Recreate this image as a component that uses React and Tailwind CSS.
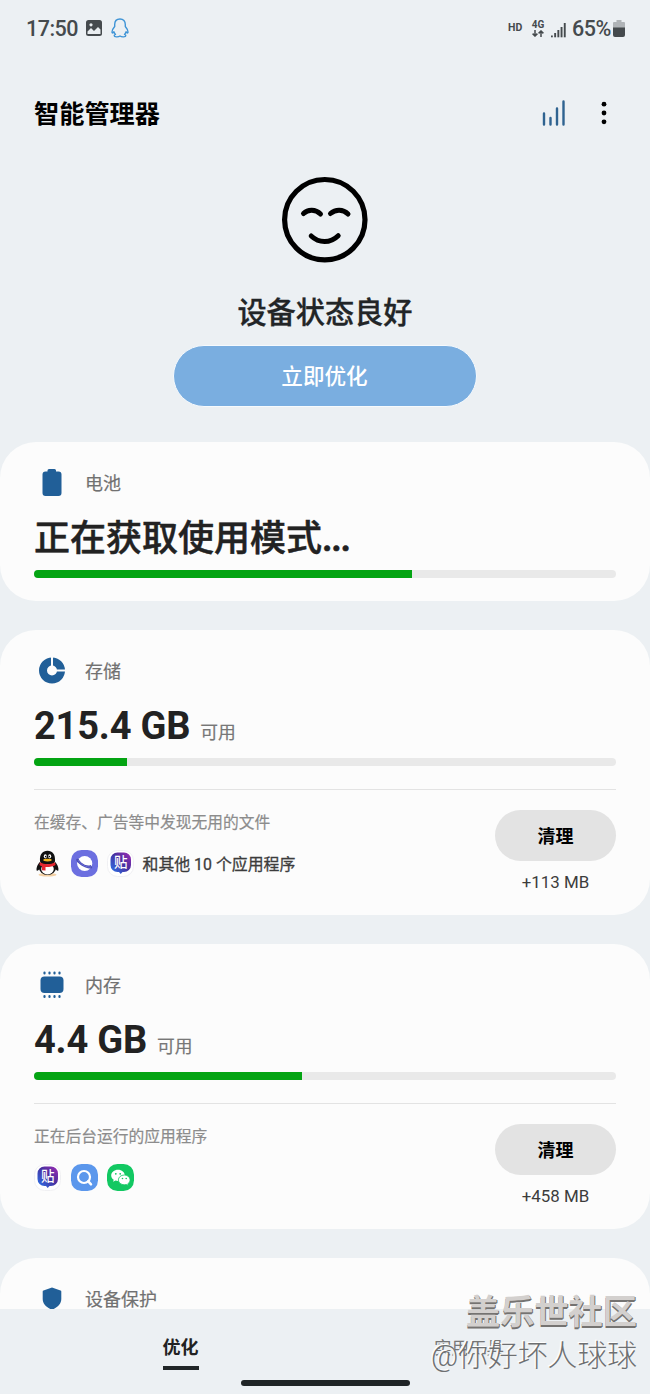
import React from 'react';

function StatusBar() {
  return (
    <div className="h-14 pl-[26px] pr-[25px] flex items-center justify-between text-[#454a4d]">
      <div className="flex items-center">
        <span className="w-[60px] pt-px text-[21.5px] tracking-[-0.5px] font-medium leading-none">17:50</span>
        <svg className="w-4 h-4" viewBox="0 0 16 16">
          <rect width="16" height="16" rx="2.5" fill="currentColor" />
          <path d="M1.5 11.5 5 8l3 3 4-4 2.5 2.5V14h-13z" fill="#e9edf0" />
          <circle cx="5" cy="4.8" r="1.6" fill="#e9edf0" />
        </svg>
        <svg className="ml-[9px] w-[18px] h-5" viewBox="0 0 18 20" fill="none" stroke="#3f94d6" strokeWidth="1.4" strokeLinejoin="round">
          <path d="M9 1C5.6 1 3.7 3.4 3.7 6.5v2C2.4 10 1 12 1 14c0 1 .6 1.2 1.2.6l.7-.8c.3 1 .9 1.9 1.6 2.6-.9.4-1.3.8-1.3 1.3 0 1.3 4 1.600 5.800.3 1.800 1.300 5.800 1 5.800-.3 0-.5-.4-.9-1.300-1.300.7-.7 1.300-1.600 1.600-2.600l.7.8c.6.6 1.200.4 1.200-.6 0-2-1.400-4-2.700-5.500v-2C14.300 3.400 12.400 1 9 1z" />
        </svg>
      </div>
      <div className="flex items-center">
        <span className="w-[22px] pt-px text-[10.5px] font-bold leading-none">HD</span>
        <div className="w-[16px] flex flex-col items-center text-[10px] font-bold leading-[10px]">
          <span>4G</span>
          <svg className="w-3 h-[7px]" viewBox="0 0 12 7" fill="none" stroke="currentColor" strokeWidth="1.5">
            <path d="M3 0v6M.6 3.600 3 6l2.400-2.400M9 7V1M6.600 3.400 9 1l2.400 2.400" />
          </svg>
        </div>
        <svg className="ml-[5px] mt-[3px] w-[15px] h-4" viewBox="0 0 15 16" fill="currentColor">
          <rect x="0" y="13.5" width="1.8" height="1.8" />
          <rect x="3.2" y="11" width="1.9" height="4.3" />
          <rect x="6.4" y="8" width="1.9" height="7.3" />
          <rect x="9.6" y="5" width="1.9" height="10.3" />
          <rect x="12.8" y="1" width="1.9" height="14.3" />
        </svg>
        <span className="ml-[6px] w-[40px] pt-px text-[21.5px] tracking-[-0.5px] font-medium leading-none">65%</span>
        <svg className="ml-px w-3 h-[17px]" viewBox="0 0 12 17">
          <path d="M3.500 0h5v2H11a1 1 0 0 1 1 1v5H0V3a1 1 0 0 1 1-1h2.500z" fill="#b0b4b7" />
          <path d="M0 7.500h12V15a2 2 0 0 1-2 2H2a2 2 0 0 1-2-2z" fill="currentColor" />
        </svg>
      </div>
    </div>
  );
}

function Header() {
  return (
    <header className="h-[114px] pl-[34px] pr-[43px] flex items-center justify-between">
      <h1 className="pt-1 text-[25.2px] font-bold text-black leading-none">智能管理器</h1>
      <div className="flex items-center">
        <svg className="w-6 h-[26px]" viewBox="0 0 24 26" stroke="#2f6390" strokeWidth="2.4" strokeLinecap="round">
          <path d="M2 13.500v11M8.500 18v6.500M15 8.500v16M21.500 1.500v23" />
        </svg>
        <svg className="ml-[35px] w-[6px] h-[24px]" viewBox="0 0 6 24">
          <circle cx="3" cy="3.2" r="2.4" />
          <circle cx="3" cy="12" r="2.4" />
          <circle cx="3" cy="20.8" r="2.4" />
        </svg>
      </div>
    </header>
  );
}

function DeviceStatus() {
  return (
    <section className="h-[272px] pt-[6px] flex flex-col items-center">
      <svg className="w-[88px] h-[88px]" viewBox="0 0 88 88" fill="none" stroke="#000" strokeLinecap="round">
        <circle cx="43.8" cy="43.7" r="40.2" strokeWidth="5.2" />
        <path d="M22.500 37.500c4.500-4.500 12-4.500 17 .500M49.500 37.500c5-4.500 12.500-4.500 17.500.500M30.200 60c8 7.500 19 7.500 27-.300" strokeWidth="5" />
      </svg>
      <h2 className="mt-[32px] text-[29.2px] font-medium text-[#222527] leading-[34px] [-webkit-text-stroke:0.3px]">设备状态良好</h2>
      <button className="mt-[15px] mr-px w-[304px] h-[62px] rounded-full border border-[#f6fafd] bg-[#7aaee0] text-[21.6px] font-medium text-white leading-none">
        <span className="relative top-px">立即优化</span>
      </button>
    </section>
  );
}

const BatteryIcon = () => (
  <svg className="w-7 h-7" viewBox="0 0 28 28" fill="#215f98">
    <path d="M9.500 1.500A1.500 1.500 0 0 1 11 0h5.500A1.500 1.500 0 0 1 18 1.500v1h2.500a3 3 0 0 1 3 3V24a3 3 0 0 1-3 3h-13a3 3 0 0 1-3-3V5.500a3 3 0 0 1 3-3h2z" />
  </svg>
);

const StorageIcon = () => (
  <svg className="w-7 h-7" viewBox="0 0 28 28">
    <circle cx="14" cy="13.5" r="9" fill="none" stroke="#215f98" strokeWidth="8" />
    <path d="M14 0v13.500h14" fill="none" stroke="#fcfcfc" strokeWidth="2" />
  </svg>
);

const MemoryIcon = () => (
  <svg className="w-7 h-7" viewBox="0 0 28 28" fill="#215f98">
    <rect x="2.5" y="5.5" width="23" height="16.5" rx="4" />
    <path d="M6.500 2.500V1.500M11.500 2.500V1.500M16.500 2.500V1.500M21.500 2.500V1.500M6.500 26V25M11.500 26V25M16.500 26V25M21.500 26V25" stroke="#215f98" strokeWidth="2.2" strokeLinecap="round" />
  </svg>
);

const ShieldIcon = () => (
  <svg className="w-7 h-7" viewBox="0 0 28 28" fill="#215f98">
    <path d="M14 2.500l8.500 3a1 1 0 0 1 .8 1v7.500c0 5-3.800 8.500-9.300 10.800C8.500 22.500 4.700 19 4.700 14V6.500a1 1 0 0 1 .8-1z" />
  </svg>
);

const QQIcon = () => (
  <svg className="w-[27px] h-[27px]" viewBox="0 0 27 27">
    <ellipse cx="13.5" cy="24.7" rx="9" ry="1.8" fill="#f3d0a4" />
    <path d="M6 12c-2.500 2-4 6.500-3.300 8.500.5 1 2.300-.5 3.300-2zM21 12c2.500 2 4 6.500 3.300 8.500-.5 1-2.300-.5-3.300-2z" fill="#111" />
    <ellipse cx="13.5" cy="17.5" rx="8.7" ry="7.5" fill="#111" />
    <ellipse cx="13.5" cy="19" rx="6.3" ry="5.4" fill="#fff" />
    <path d="M6 11C5.500 4.500 8.500.8 13.500.8S21.500 4.500 21 11c0 2-3 3.500-7.500 3.500S6 13 6 11z" fill="#111" />
    <ellipse cx="11.3" cy="6.3" rx="1.5" ry="2.1" fill="#fff" />
    <ellipse cx="15.7" cy="6.3" rx="1.5" ry="2.1" fill="#fff" />
    <circle cx="11.7" cy="6.6" r=".8" />
    <circle cx="15.3" cy="6.6" r=".8" />
    <ellipse cx="13.5" cy="10.1" rx="4.3" ry="1.4" fill="#f2b51e" />
    <path d="M6 12.300c4 2.600 11 2.600 15 0l.6 2.600c-2.800 1.600-6.500 2.300-10.100 2.100v3.500l-3.500-.3v-4c-1-.3-1.800-.7-2.600-1.300z" fill="#e3262f" />
  </svg>
);

const BrowserIcon = () => (
  <svg className="w-[27px] h-[27px]" viewBox="0 0 27 27">
    <rect width="27" height="27" rx="10.5" fill="#6c6fe0" />
    <circle cx="13.7" cy="13.5" r="7.6" fill="#fff" />
    <path d="M7.500 8.800C4 8.200 4.700 10.800 8.200 13.800s9.500 5.200 12 4.700c1.600-.4 1.200-1.900-.6-3.600-3.200 2-9.600-1-12.100-6.100z" fill="#4a4db0" />
    <path d="M7 10c2.500 4.500 8 7.500 13.200 7" fill="none" stroke="#6c6fe0" strokeWidth="1" />
  </svg>
);

const TiebaIcon = () => (
  <svg className="w-[27px] h-[27px]" viewBox="0 0 27 27">
    <defs>
      <linearGradient id="tieba" x1="1" y1="0" x2="0" y2="1">
        <stop offset="0" stopColor="#a02bb4" />
        <stop offset=".45" stopColor="#47309f" />
        <stop offset="1" stopColor="#2a7af0" />
      </linearGradient>
    </defs>
    <rect x=".5" y=".5" width="26" height="26" rx="10" fill="#fff" stroke="#f0f0f3" />
    <path d="M10.500 2.500h6.500a7 7 0 0 1 7 7v5.500a7 7 0 0 1-7 7h-1.500L13.700 24l-1.700-2h-1.500a7 7 0 0 1-7-7V9.500a7 7 0 0 1 7-7z" fill="url(#tieba)" />
    <text x="13.7" y="17.4" textAnchor="middle" fontSize="13.5" fontWeight="500" fill="#fff">贴</text>
  </svg>
);

const FinderIcon = () => (
  <svg className="w-[27px] h-[27px]" viewBox="0 0 27 27">
    <rect width="27" height="27" rx="10.5" fill="#5b97ec" />
    <circle cx="13" cy="13" r="6" fill="none" stroke="#fff" strokeWidth="2.2" />
    <path d="M17.300 17.300l2.700 3" stroke="#fff" strokeWidth="2.5" strokeLinecap="round" />
  </svg>
);

const WeChatIcon = () => (
  <svg className="w-[27px] h-[27px]" viewBox="0 0 27 27">
    <rect width="27" height="27" rx="10.5" fill="#12c862" />
    <path d="M11 5.800c-3.800 0-6.800 2.500-6.800 5.600 0 1.800 1 3.300 2.500 4.400l-.6 2 2.400-1.200c.8.2 1.600.4 2.500.4 3.800 0 6.800-2.500 6.800-5.600S14.800 5.800 11 5.800z" fill="#fff" />
    <path d="M17.300 11c-3.300 0-5.900 2.200-5.900 4.900s2.600 4.900 5.900 4.900c.7 0 1.400-.1 2-.3l2 1-.5-1.700c1.400-.9 2.300-2.300 2.300-3.900 0-2.700-2.600-4.900-5.800-4.900z" fill="#fff" stroke="#12c862" strokeWidth=".8" />
    <g fill="#12c862">
      <circle cx="8.8" cy="9.8" r=".9" />
      <circle cx="13.2" cy="9.8" r=".9" />
      <circle cx="15.5" cy="14.5" r=".8" />
      <circle cx="19.2" cy="14.5" r=".8" />
    </g>
  </svg>
);

function CardTitle({ icon, title }) {
  return (
    <div className="h-[34px] pl-1 flex items-center">
      {icon}
      <span className="ml-[19px] pt-[2px] text-[18px] text-[#717171] leading-none [-webkit-text-stroke:0.2px]">{title}</span>
    </div>
  );
}

function Progress({ value }) {
  return (
    <div className="h-2 rounded-full bg-[#e9e9e9] overflow-hidden">
      <div className="h-full bg-[#04a413]" style={{ width: `${value}%` }} />
    </div>
  );
}

function UsageCard({ icon, title, amount, percent, note, apps, more, freed }) {
  return (
    <section className="h-[285px] shrink-0 rounded-[36px] bg-[#fcfcfc] px-[34px] pt-6">
      <CardTitle icon={icon} title={title} />
      <div className="h-[70px] pt-4 flex items-baseline text-[#222]">
        <span className="text-[38px] tracking-[-0.2px] font-bold leading-[44px] whitespace-nowrap">{amount}</span>
        <span className="ml-[10px] text-[17.8px] text-[#777] [-webkit-text-stroke:0.2px]">可用</span>
      </div>
      <Progress value={percent} />
      <div className="mt-[23px] border-t border-[#e3e3e3] flex justify-between">
        <div className="pt-[23px]">
          <p className="text-[15.75px] text-[#8c8c8c] leading-[20px] [-webkit-text-stroke:0.2px]">{note}</p>
          <div className="mt-[17px] flex items-center gap-[9.5px]">
            {apps}
            {more && <span className="-ml-px pt-[2px] text-[15.9px] text-[#3c3c3c] leading-none [-webkit-text-stroke:0.3px]">{more}</span>}
          </div>
        </div>
        <div className="pt-5 flex flex-col items-center">
          <button className="w-[121px] h-[51px] rounded-full bg-[#e3e3e3] text-[18px] font-bold text-black leading-none">
            <span className="relative top-px">清理</span>
          </button>
          <span className="mt-[11px] text-[16.9px] text-[#3c3c3c] leading-[20px]">{freed}</span>
        </div>
      </div>
    </section>
  );
}

function BottomNav() {
  return (
    <nav className="h-[85px] shrink-0 bg-[#ecf0f3] flex flex-col justify-between items-center pb-2">
      <div className="w-full flex pt-[26px]">
        <div className="w-[361px] flex justify-center">
          <div className="w-9 h-[35px] border-b-4 border-[#212628] text-[18px] font-bold text-[#222] leading-[25px] whitespace-nowrap">优化</div>
        </div>
        <div className="w-[216px] flex justify-center text-[17.5px] text-[#777] leading-[26px]">实用工具</div>
      </div>
      <div className="w-[169px] h-[6px] rounded-full bg-[#1f2426]" />
    </nav>
  );
}

function Watermark() {
  return (
    <div className="absolute right-[13px] bottom-[18px] flex flex-col items-end whitespace-nowrap">
      <span className="text-[34.2px] font-bold leading-[44px] text-[#7d7b7a] [text-shadow:-1px_-1px_0_#d0cdcb]">
        <span className="text-[#d3d0ce] [text-shadow:1px_1px_0_#757371,0_2px_0_#757371]">盖乐世社区</span>
      </span>
      <span className="mt-[2px] text-[29.8px] font-light leading-[40px] text-[#6e7072] [text-shadow:-1px_-1px_0_#fff,-2px_-1px_0_#f5f5f5]">@你好坏人球球</span>
    </div>
  );
}

function App() {
  return (
    <div
      lang="zh-CN"
      className="relative w-[650px] h-[1394px] overflow-hidden flex flex-col bg-[#ecf0f3] font-[Roboto,'Noto_Sans_CJK_SC',sans-serif]"
    >
      <StatusBar />
      <Header />
      <DeviceStatus />
      <main className="h-[867px] flex flex-col gap-[29px] overflow-hidden">
        <section className="h-[159px] shrink-0 rounded-[36px] bg-[#fcfcfc] px-[34px] pt-6">
          <CardTitle icon={<BatteryIcon />} title="电池" />
          <div className="h-[70px] pt-4 text-[36px] font-medium text-[#222] leading-[46px] [-webkit-text-stroke:0.5px]">
            正在获取使用模式<span className="font-bold tracking-[-1.2px]">...</span>
          </div>
          <Progress value={65} />
        </section>
        <UsageCard
          icon={<StorageIcon />}
          title="存储"
          amount="215.4 GB"
          percent={16}
          note="在缓存、广告等中发现无用的文件"
          apps={<><QQIcon /><BrowserIcon /><TiebaIcon /></>}
          more="和其他 10 个应用程序"
          freed="+113 MB"
        />
        <UsageCard
          icon={<MemoryIcon />}
          title="内存"
          amount="4.4 GB"
          percent={46}
          note="正在后台运行的应用程序"
          apps={<><TiebaIcon /><FinderIcon /><WeChatIcon /></>}
          freed="+458 MB"
        />
        <section className="h-[159px] shrink-0 rounded-t-[36px] bg-[#fcfcfc] px-[34px] pt-6">
          <CardTitle icon={<ShieldIcon />} title="设备保护" />
        </section>
      </main>
      <BottomNav />
      <Watermark />
    </div>
  );
}

export default App;
